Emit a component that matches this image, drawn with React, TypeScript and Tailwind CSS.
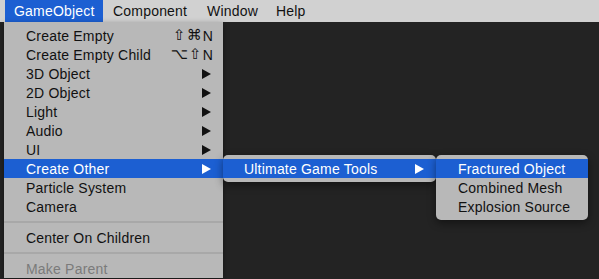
import React from 'react';
import clsx from 'clsx';

type Item =
    | { kind: 'sep' }
    | { kind: 'item'; label: string; mods?: string; sub?: boolean; active?: boolean; disabled?: boolean };

const mainItems: Item[] = [
    { kind: 'item', label: 'Create Empty', mods: '⇧⌘' },
    { kind: 'item', label: 'Create Empty Child', mods: '⌥⇧' },
    { kind: 'item', label: '3D Object', sub: true },
    { kind: 'item', label: '2D Object', sub: true },
    { kind: 'item', label: 'Light', sub: true },
    { kind: 'item', label: 'Audio', sub: true },
    { kind: 'item', label: 'UI', sub: true },
    { kind: 'item', label: 'Create Other', sub: true, active: true },
    { kind: 'item', label: 'Particle System' },
    { kind: 'item', label: 'Camera' },
    { kind: 'sep' },
    { kind: 'item', label: 'Center On Children' },
    { kind: 'sep' },
    { kind: 'item', label: 'Make Parent', disabled: true },
];

function Arrow({ white }: { white?: boolean }) {
    return (
        <svg width="9" height="10" viewBox="0 0 9 10" className="shrink-0">
            <path d="M0 0 L9 5 L0 10 Z" fill={white ? '#ffffff' : '#111111'} />
        </svg>
    );
}

function Row({ item, padL }: { item: Extract<Item, { kind: 'item' }>; padL: string }) {
    return (
        <div
            className={clsx('flex h-[19px] items-center pr-[12px]', padL, {
                'bg-[#1c5fd2] text-white': item.active,
                'text-[#7b7b7b]': item.disabled,
                'text-[#111]': !item.active && !item.disabled,
            })}
        >
            <span className="flex-1 whitespace-nowrap">{item.label}</span>
            {item.mods && (
                <span className="-mr-[2px] flex items-center whitespace-nowrap">
                    <span className="font-['DejaVu_Sans',sans-serif] text-[15px] tracking-[1px]">{item.mods}</span>
                    <span>N</span>
                </span>
            )}
            {item.sub && <Arrow white={item.active} />}
        </div>
    );
}

export default function App() {
    return (
        <div className="relative h-[279px] w-[599px] overflow-hidden bg-[#232323] font-['Liberation_Sans',Arial,sans-serif] text-[14px] leading-none tracking-[0.2px]">
            {/* menu bar */}
            <div className="flex h-[22px] items-stretch bg-[#d1d1d1] pl-[5px] text-[#111]">
                <div className="flex w-[98px] items-center bg-[#1c5fd2] pl-[9px] text-white">GameObject</div>
                <div className="flex w-[94px] items-center pl-[10px]">Component</div>
                <div className="flex w-[69px] items-center pl-[10px]">Window</div>
                <div className="flex items-center pl-[10px]">Help</div>
            </div>

            {/* dropdown */}
            <div className="absolute left-[4px] top-[22px] w-[219px] bg-[#b8b8b8] pt-[4px] shadow-[0_2px_6px_rgba(0,0,0,0.4)]">
                {mainItems.map((item, i) =>
                    item.kind === 'sep' ? (
                        <div key={i} className="flex h-[12px] items-center">
                            <div className="h-[2px] w-full bg-[#a8a8a8]" />
                        </div>
                    ) : (
                        <Row key={i} item={item} padL="pl-[22px]" />
                    )
                )}
            </div>

            {/* submenu 1 */}
            <div className="absolute left-[223px] top-[155px] w-[213px] rounded-[5px] bg-[#b8b8b8] py-[4px] shadow-[0_3px_8px_rgba(0,0,0,0.45)]">
                <Row item={{ kind: 'item', label: 'Ultimate Game Tools', sub: true, active: true }} padL="pl-[21px]" />
            </div>

            {/* submenu 2 */}
            <div className="absolute left-[436px] top-[155px] w-[152px] rounded-[5px] bg-[#b8b8b8] py-[4px] shadow-[0_3px_8px_rgba(0,0,0,0.45)]">
                <Row item={{ kind: 'item', label: 'Fractured Object', active: true }} padL="pl-[22px]" />
                <Row item={{ kind: 'item', label: 'Combined Mesh' }} padL="pl-[22px]" />
                <Row item={{ kind: 'item', label: 'Explosion Source' }} padL="pl-[22px]" />
            </div>
        </div>
    );
}
